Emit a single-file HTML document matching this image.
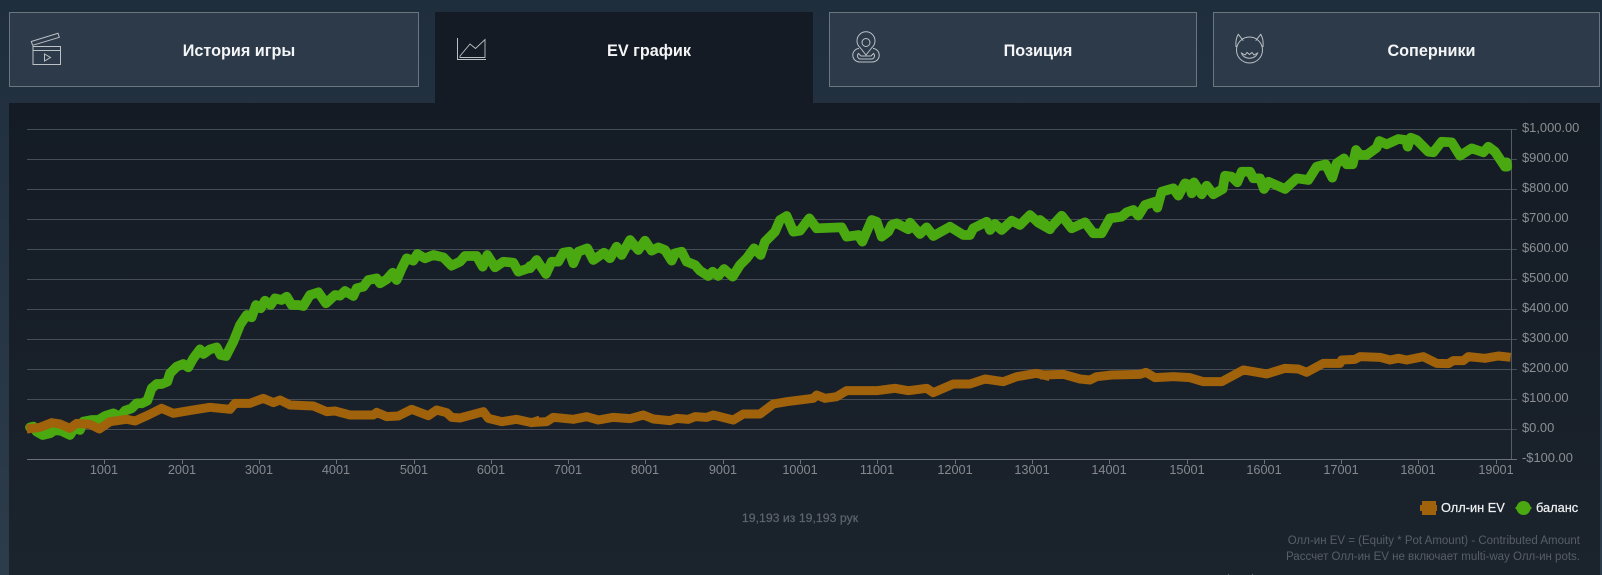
<!DOCTYPE html>
<html lang="ru">
<head>
<meta charset="utf-8">
<title>EV график</title>
<style>
html,body{margin:0;padding:0}
body{position:relative;width:1602px;height:575px;overflow:hidden;background:linear-gradient(#1f2e3d,#2d3c4a);font-family:"Liberation Sans","DejaVu Sans",sans-serif}
.tab{position:absolute;top:12px;height:75px;box-sizing:border-box;background:#2c3a4a;border:1px solid #6b7580}
.tab.on{background:#141b24;border:0;height:92px}
.tt{position:absolute;left:0;right:0;top:1.5px;height:75px;line-height:75px;padding-left:50px;box-sizing:border-box;text-align:center;color:#f4f5f6;font-weight:bold;font-size:16.2px}
.tab:not(.on) .tt{top:.5px}
.panel{position:absolute;left:9px;top:103px;width:1591px;height:472px;background:linear-gradient(#141b24,#1b232d)}
svg{position:absolute;left:0;top:0}
.ic{fill:none;stroke:#bcc1c5;stroke-width:1}
.a{font-size:12.9px;fill:#8b8f93}
.x{font-size:12.7px;fill:#85898e;text-anchor:middle}
.t{position:absolute;white-space:nowrap}
.lg{font-size:12.800px;line-height:15px;color:#eef0f1;-webkit-text-stroke:.25px #eef0f1}
</style>
</head>
<body>
<div class="tab" style="left:9px;width:410px"><div class="tt">История игры</div></div>
<div class="tab on" style="left:435px;width:378px"><div class="tt">EV график</div></div>
<div class="tab" style="left:829px;width:368px"><div class="tt">Позиция</div></div>
<div class="tab" style="left:1213px;width:387px"><div class="tt">Соперники</div></div>
<div class="panel"></div>

<svg width="1602" height="575" viewBox="0 0 1602 575">
<!-- icons -->
<g class="ic">
<path d="M33 46.5H60.5V64.5H33ZM33 50.5H60.5"/>
<path d="M31.3 41.5L58 33.3L59.3 37.3L32.6 45.3Z"/>
<path d="M44.5 54V61L50.5 57.5Z"/>
</g>
<g class="ic">
<path d="M457.5 38V59.5H486"/>
<path d="M460 56L470 44L475.5 48.5L485 39.5V57.5H460Z" stroke-width=".9"/>
</g>
<g class="ic">
<path d="M866 55L860 47.5A9 9 0 1 1 872 47.5Z"/>
<circle cx="866" cy="42.5" r="4"/>
<path d="M859 48.5H858.5A6.8 6.8 0 0 0 860 62H872A6.8 6.8 0 0 0 873.5 48.5H873"/>
<path d="M858.5 53.5A3.2 3.2 0 0 0 860.5 59H871.5A3.2 3.2 0 0 0 873.5 53.5L871 56H861Z"/>
</g>
<g class="ic">
<circle cx="1249.5" cy="50" r="13"/>
<path d="M1236 47C1235.500 42 1236.500 37 1238.300 34.300L1243.300 40.700M1263 47C1263.500 42 1262.500 37 1260.700 34.300L1255.700 40.700"/>
<path d="M1241.500 53C1243.500 60 1255.500 60 1257.500 53L1254 55L1252 52.500L1249.500 54.500L1247 52.500L1245 55Z"/>
</g>

<!-- grid -->
<g stroke="#474d56" stroke-width="1" shape-rendering="crispEdges">
<path d="M27 129.5H1517M27 159.5H1517M27 189.5H1517M27 219.500H1517M27 249.500H1517M27 279.500H1517M27 309.500H1517M27 339.500H1517M27 369.500H1517M27 399.500H1517M27 429.500H1517"/>
<path d="M1511.500 129V459" stroke="#565c64"/>
<path d="M27 459.500H1517" stroke="#6b7178"/>
<path d="M104.500 460V464M182.500 460V464M259.500 460V464M336.500 460V464M414.500 460V464M491.500 460V464M568.500 460V464M645.500 460V464M723.500 460V464M800.500 460V464M877.500 460V464M955.500 460V464M1032.500 460V464M1109.500 460V464M1187.500 460V464M1264.500 460V464M1341.500 460V464M1418.500 460V464M1496.500 460V464" stroke="#6b7178"/>
</g>

<!-- green series -->
<g fill="none" stroke="#4aa810" stroke-width="29" stroke-linejoin="round" stroke-linecap="round">
<polyline transform="translate(20 230) scale(.33333)" points="30,592 40,590 50,605 68,615 90,610 105,600 125,603 150,615 160,600 172,582 180,600 190,575 215,570 235,570 255,558 280,550 300,560 315,542 335,535 350,520 365,520 382,512 395,475 410,462 425,462 442,455 450,430 470,410 490,402 505,412 520,385 540,358 550,372 570,358 590,352 602,375 618,378 640,335 660,285 680,255 695,262 708,225 722,235 735,212 752,225 765,205 785,210 800,200 815,225 835,225 850,228 870,195 895,187 918,220 945,195 960,197 975,183 1000,198 1010,175 1030,170 1045,150 1070,145 1080,160 1100,148 1118,128 1130,150 1145,115 1160,85 1180,92 1192,72 1215,85 1240,75 1270,82 1295,107 1320,95 1335,78 1370,78 1388,110 1402,75 1425,112 1450,95 1480,98 1495,125 1525,115 1530,108"/>
<polyline transform="translate(530 200) scale(.33333)" points="0,205 20,180 48,222 65,185 85,185 100,158 118,155 130,190 145,155 172,145 190,180 222,158 240,175 260,140 275,165 300,120 325,150 345,122 365,152 385,142 405,150 425,182 435,160 455,155 470,185 495,195 510,212 535,228 548,215 565,228 582,207 608,230 630,195 650,175 672,145 692,165 705,125 735,95 750,60 770,48 790,95 810,92 838,55 860,85 935,82 950,110 985,105 997,125 1025,60 1040,65 1055,110 1075,95 1085,75 1100,70 1135,88 1140,68 1170,102 1190,82 1210,108 1260,80 1300,105 1320,105 1330,85 1370,65 1380,90 1395,72 1415,90 1445,62 1470,75 1500,45 1525,68 1560,88"/>
<polyline transform="translate(1040 125) scale(.33333)" points="0,285 30,310 65,272 95,310 135,292 160,325 185,325 210,280 245,275 260,262 280,255 295,272 315,240 345,230 352,248 365,200 400,190 415,212 435,175 450,180 455,205 462,172 485,208 500,182 520,208 548,192 555,152 575,155 592,172 605,140 630,140 640,160 660,160 672,192 685,170 735,192 770,160 805,165 830,125 857,118 877,158 890,115 912,100 920,118 938,118 948,75 960,90 980,90 1010,68 1018,48 1040,58 1075,42 1098,45 1103,65 1112,38 1130,45 1165,80 1180,82 1205,50 1235,52 1260,92 1295,70 1330,82 1345,65 1365,80 1395,125 1402,125 1400,112"/>
</g>
<!-- orange series -->
<g fill="none" stroke="#a0620a" stroke-width="27" stroke-linejoin="round" stroke-linecap="butt">
<polyline transform="translate(20 230) scale(.33333)" points="20,597 60,592 95,578 120,582 150,595 170,580 210,583 238,597 270,575 320,568 345,573 385,555 425,535 460,550 520,540 570,532 630,538 645,520 690,520 730,505 760,518 780,510 810,525 880,528 920,545 945,543 990,555 1060,555 1070,547 1100,560 1135,558 1175,538 1225,557 1250,540 1280,548 1295,562 1320,564 1390,545 1405,565 1445,575 1490,568 1535,578 1560,570"/>
<polyline transform="translate(530 200) scale(.33333)" points="0,668 50,665 70,652 130,658 170,650 205,660 250,652 300,656 340,645 370,657 420,662 440,655 475,658 495,650 530,652 550,645 610,660 640,642 690,642 730,612 770,605 850,595 860,585 885,595 920,590 950,572 1040,572 1095,565 1135,572 1190,565 1210,578 1270,552 1320,552 1365,537 1420,545 1460,530 1520,520 1560,530"/>
<polyline transform="translate(1040 125) scale(.33333)" points="0,750 70,748 120,762 150,765 170,755 215,750 300,748 318,742 345,758 400,755 450,758 490,770 545,770 610,735 680,747 735,730 775,732 800,742 850,715 900,715 905,705 945,703 960,695 1020,697 1050,705 1075,700 1100,705 1150,695 1190,715 1225,716 1240,707 1270,707 1285,695 1335,700 1375,693 1412,697"/>
</g>

<!-- y labels -->
<g class="a">
<text x="1522" y="132">$1,000.00</text>
<text x="1522" y="162">$900.00</text>
<text x="1522" y="192">$800.00</text>
<text x="1522" y="222">$700.00</text>
<text x="1522" y="252">$600.00</text>
<text x="1522" y="282">$500.00</text>
<text x="1522" y="312">$400.00</text>
<text x="1522" y="342">$300.00</text>
<text x="1522" y="372">$200.00</text>
<text x="1522" y="402">$100.00</text>
<text x="1522" y="432">$0.00</text>
<text x="1522" y="462">-$100.00</text>
</g>
<!-- x labels -->
<g class="x">
<text x="104" y="474">1001</text>
<text x="182" y="474">2001</text>
<text x="259" y="474">3001</text>
<text x="336" y="474">4001</text>
<text x="414" y="474">5001</text>
<text x="491" y="474">6001</text>
<text x="568" y="474">7001</text>
<text x="645" y="474">8001</text>
<text x="723" y="474">9001</text>
<text x="800" y="474">10001</text>
<text x="877" y="474">11001</text>
<text x="955" y="474">12001</text>
<text x="1032" y="474">13001</text>
<text x="1109" y="474">14001</text>
<text x="1187" y="474">15001</text>
<text x="1264" y="474">16001</text>
<text x="1341" y="474">17001</text>
<text x="1418" y="474">18001</text>
<text x="1496" y="474">19001</text>
</g>

<!-- legend swatches -->
<path d="M1422 501H1436V505H1437V511H1436V515H1422V511H1420V505H1422Z" fill="#a0620a"/>
<circle cx="1523.500" cy="508" r="7" fill="#4aa810"/>
<path d="M1515 508L1517 506V510ZM1532 508L1530 506V510Z" fill="#4aa810"/>
<path d="M1228 574h1v1h-1ZM1252 574h1v1h-1Z" fill="#6a7078"/>
</svg>

<div class="t lg" style="left:1441px;top:500px">Олл-ин EV</div>
<div class="t lg" style="left:1536px;top:500px">баланс</div>
<div class="t" style="left:700px;width:200px;top:511px;text-align:center;font-size:12.300px;line-height:15px;color:#5e656d;-webkit-text-stroke:.2px #5e656d">19,193 из 19,193 рук</div>
<div class="t" style="right:22px;top:534px;text-align:right;font-size:11.500px;line-height:15.700px;color:#575e66">Олл-ин EV = (Equity * Pot Amount) - Contributed Amount<br>Рассчет Олл-ин EV не включает multi-way Олл-ин pots.</div>
</body>
</html>
